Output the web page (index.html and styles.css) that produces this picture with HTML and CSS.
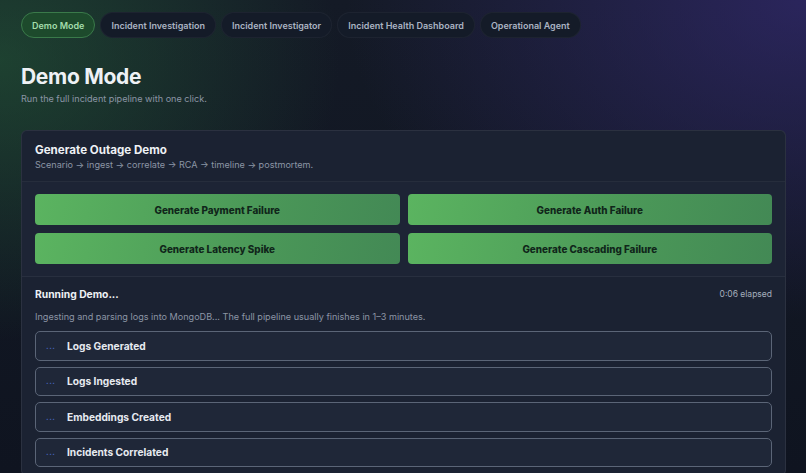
FILE: index.html
```html
<!DOCTYPE html>
<html>
<head>
<meta charset="utf-8">
<link rel="stylesheet" href="styles.css">
</head>
<body>
<div class="page">
  <div class="tabs">
    <a class="tab active">Demo Mode</a>
    <a class="tab">Incident Investigation</a>
    <a class="tab">Incident Investigator</a>
    <a class="tab">Incident Health Dashboard</a>
    <a class="tab">Operational Agent</a>
  </div>

  <h1 class="title">Demo Mode</h1>
  <p class="subtitle">Run the full incident pipeline with one click.</p>

  <div class="card">
    <div class="card-head">
      <h2>Generate Outage Demo</h2>
      <p>Scenario &rarr; ingest &rarr; correlate &rarr; RCA &rarr; timeline &rarr; postmortem.</p>
    </div>
    <div class="card-buttons">
      <button class="gen">Generate Payment Failure</button>
      <button class="gen">Generate Auth Failure</button>
      <button class="gen">Generate Latency Spike</button>
      <button class="gen">Generate Cascading Failure</button>
    </div>
    <div class="card-run">
      <div class="run-head">
        <span class="run-title">Running Demo...</span>
        <span class="elapsed">0:06 elapsed</span>
      </div>
      <p class="run-note">Ingesting and parsing logs into MongoDB... The full pipeline usually finishes in 1&ndash;3 minutes.</p>
      <div class="steps">
        <div class="step"><span class="dots">...</span><span class="step-name">Logs Generated</span></div>
        <div class="step"><span class="dots">...</span><span class="step-name">Logs Ingested</span></div>
        <div class="step"><span class="dots">...</span><span class="step-name">Embeddings Created</span></div>
        <div class="step"><span class="dots">...</span><span class="step-name">Incidents Correlated</span></div>
      </div>
    </div>
  </div>
</div>
</body>
</html>
```

FILE: styles.css
```css
html, body {
  margin: 0;
  height: 100%;
}

body {
  font-family: Inter, "Noto Sans", sans-serif;
  color: #e6eaf0;
  background-color: #10151f;
  background-image:
    radial-gradient(ellipse 340px 280px at 0px 60px, rgba(40, 105, 60, 0.5), rgba(40, 105, 60, 0) 100%),
    radial-gradient(ellipse 460px 320px at 806px 0px, rgba(52, 42, 115, 0.7), rgba(52, 42, 115, 0) 100%),
    linear-gradient(180deg, #141a26 0%, #0f1420 100%);
  overflow: hidden;
}

.page {
  padding: 12px 20px 0 21px;
}

/* tab bar */
.tabs {
  display: flex;
  gap: 5px;
}

.tab {
  display: block;
  height: 26px;
  line-height: 25px;
  padding: 0 10px;
  border-radius: 13px;
  font-size: 9px;
  font-weight: 600;
  color: #aab3c2;
  background: #141b28;
  border: 1px solid rgba(255, 255, 255, 0.04);
  box-sizing: border-box;
}

.tab.active {
  color: #a3dcab;
  background: #1d4a2c;
  border: 1px solid #3a7a4a;
}

.title {
  margin: 25px 0 0 0;
  font-size: 21px;
  font-weight: 700;
  letter-spacing: -0.3px;
  color: #eef1f5;
  line-height: 28px;
}

.subtitle {
  margin: 2px 0 0 0;
  font-size: 9.1px;
  color: #8b95a5;
}

/* card */
.card {
  margin-top: 26px;
  background: #1b2232;
  border: 1px solid rgba(255, 255, 255, 0.07);
  border-radius: 6px;
}

.card-head {
  padding: 12px 13px 11px 13px;
  border-bottom: 1px solid rgba(255, 255, 255, 0.05);
}

.card-head h2 {
  margin: 0;
  font-size: 11.6px;
  font-weight: 700;
  color: #eef1f5;
}

.card-head p {
  margin: 2px 0 0 0;
  font-size: 9.1px;
  color: #8b95a5;
}

.card-buttons {
  display: grid;
  grid-template-columns: 1fr 1fr;
  gap: 8px;
  padding: 12px 13px 12px 13px;
  background: #1d2435;
  border-bottom: 1px solid rgba(255, 255, 255, 0.05);
}

.gen {
  height: 31px;
  border: none;
  border-radius: 4px;
  background: linear-gradient(100deg, #5bb460 0%, #4b9858 60%, #438955 100%);
  color: #10261a;
  font-family: Inter, sans-serif;
  font-size: 9.9px;
  font-weight: 800;
}

.card-run {
  padding: 11px 13px 8px 13px;
}

.run-head {
  display: flex;
  justify-content: space-between;
  align-items: center;
}

.run-title {
  font-size: 10.3px;
  font-weight: 700;
  color: #eef1f5;
}

.elapsed {
  font-size: 8.5px;
  color: #a5aebc;
}

.run-note {
  margin: 11px 0 9px 0;
  font-size: 9.1px;
  color: #8b95a5;
}

.steps {
  display: flex;
  flex-direction: column;
  gap: 6px;
}

.step {
  display: flex;
  align-items: center;
  height: 29.5px;
  border: 1px solid #5b6577;
  border-radius: 5px;
  background: #1f2738;
  padding: 0 10px;
  box-sizing: border-box;
}

.dots {
  width: 21px;
  font-size: 8px;
  font-weight: 700;
  color: #4a67c9;
  letter-spacing: 0.5px;
}

.step-name {
  font-size: 10.2px;
  font-weight: 700;
  color: #e6eaf0;
}
```
